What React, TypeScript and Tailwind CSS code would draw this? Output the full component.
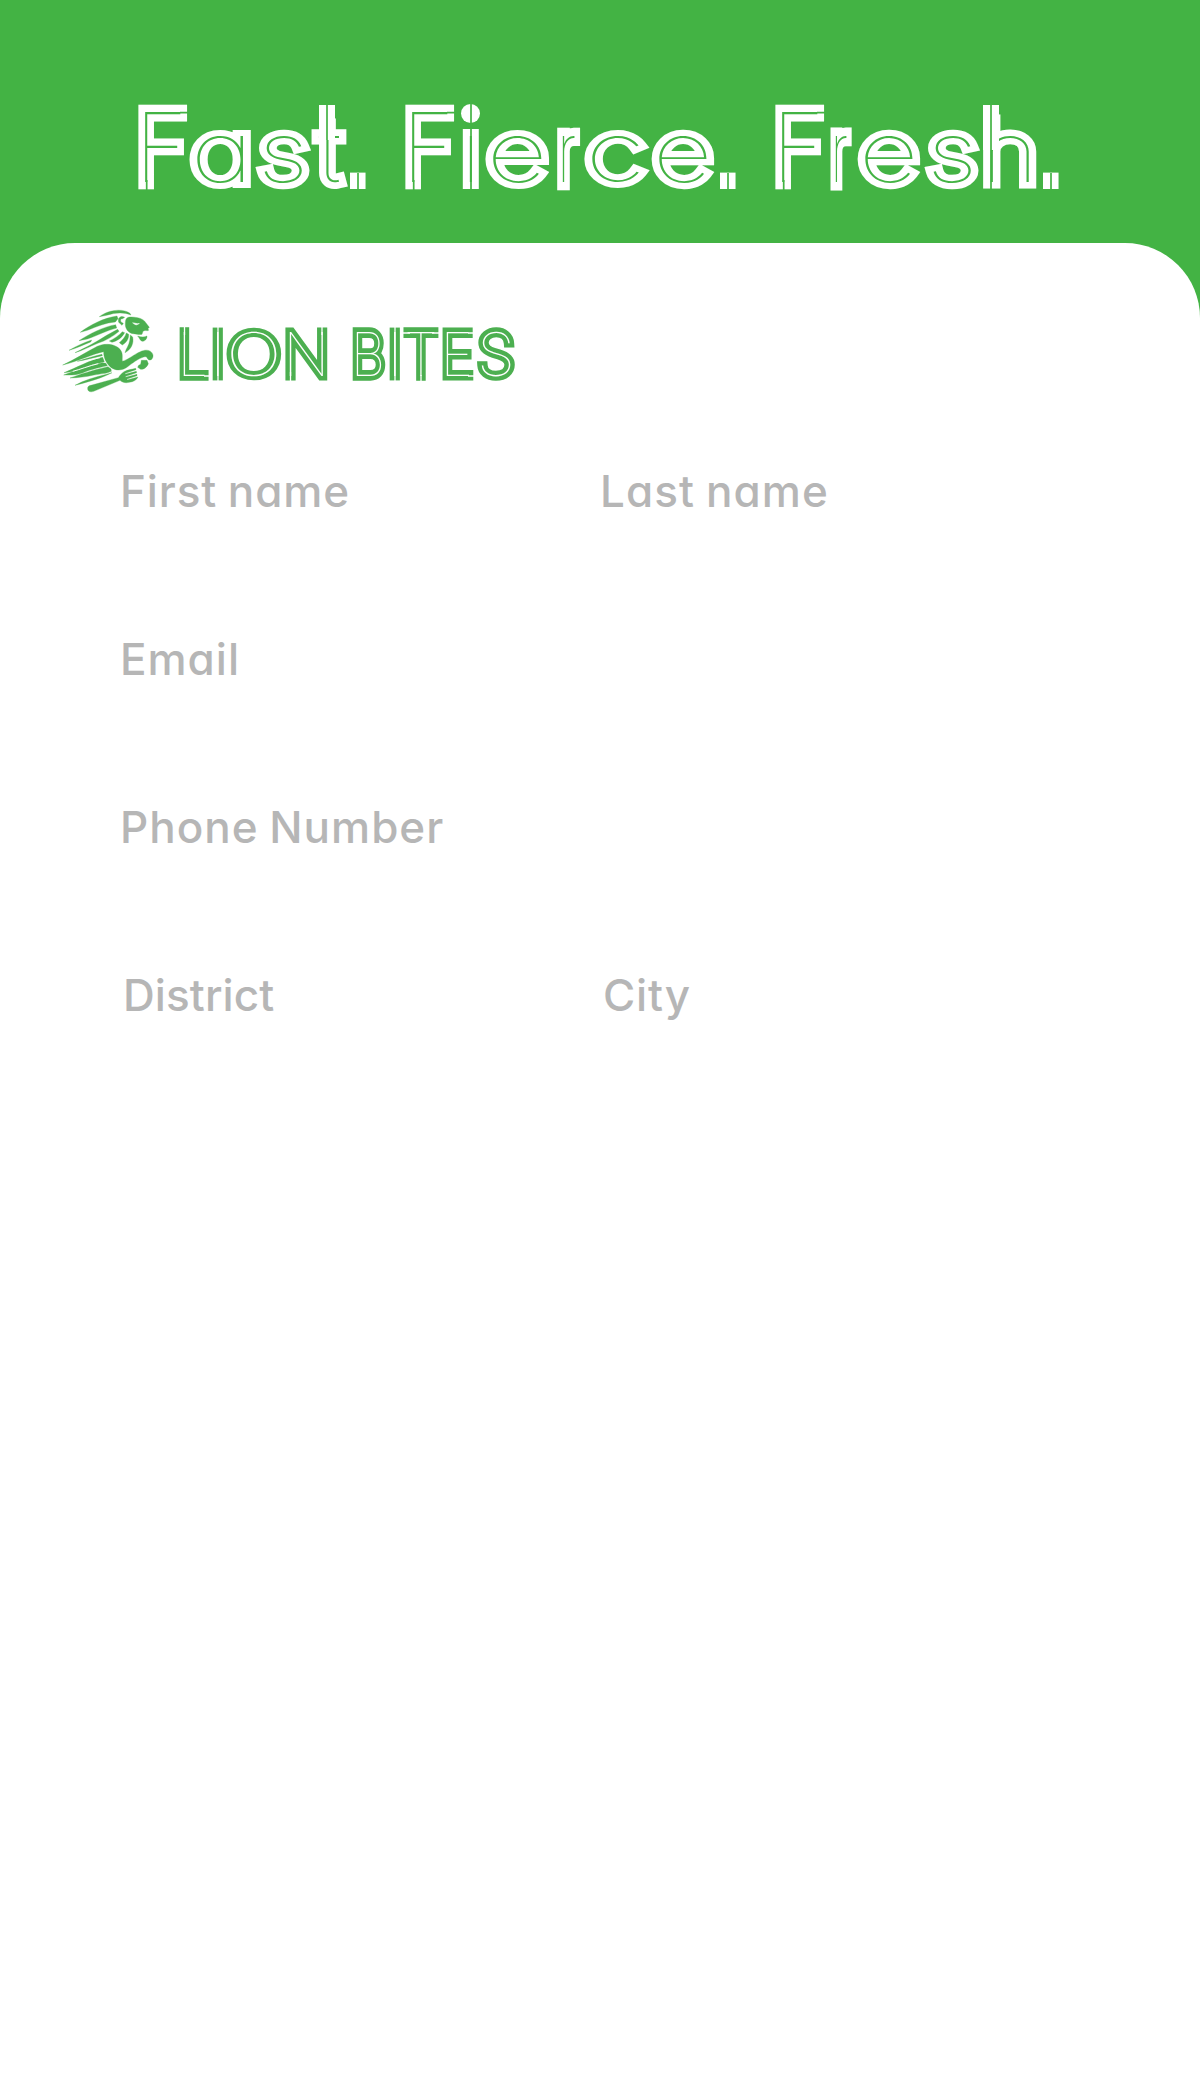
import React from 'react';

// Horizontal extent of each glyph's skeleton in Inter Thin, per 100 units.
const EXTENT: Record<string, [number, number]> = {
  F: [12.8, 50], a: [7, 49], s: [7, 42], t: [1, 22], i: [10, 12], e: [7, 51], r: [10, 29],
  c: [7, 47], h: [10, 48], L: [12.3, 49], I: [12, 13.5], O: [8, 67], N: [12.3, 64.5], B: [12.3, 56], T: [7, 55],
  E: [12.3, 51], S: [8, 53],
};

// [character, outer left, outer right, vertical scale]
type Letter = [string, number, number, number];

const HEADLINE: Letter[][] = [
  [['F', 138.5, 188, 0.965], ['a', 190, 251.5, 0.84], ['s', 257, 309, 0.84], ['t', 311.5, 347, 0.84], ['.', 350, 366, 1]],
  [['F', 405.5, 455, 0.965], ['i', 463, 479, 0.84], ['e', 486, 549, 0.84], ['r', 555, 582, 0.84], ['c', 585, 646, 0.84], ['e', 652, 714, 0.84], ['.', 720, 736, 1]],
  [['F', 775.5, 825, 0.965], ['r', 828, 854, 0.84], ['e', 858, 920, 0.84], ['s', 926, 978, 0.84], ['h', 983, 1036, 0.84], ['.', 1043, 1059, 1]],
];

const BRAND: Letter[][] = [
  [['L', 179.4, 209, 0.605], ['I', 213, 223, 0.605], ['O', 227, 281, 0.6], ['N', 285.4, 327, 0.605]],
  [['B', 352.4, 386, 0.605], ['I', 390, 400, 0.605], ['T', 403, 439, 0.605], ['E', 442.4, 474, 0.605], ['S', 477, 515, 0.6]],
];

interface InlineWordsProps {
  words: Letter[][];
  baseline: number;
  weight: number;
  hairline: number;
  ink: string;
  line: string;
}

function InlineWords({ words, baseline, weight, hairline, ink, line }: InlineWordsProps) {
  return (
    <>
      {words.map((letters, w) => (
        <g key={w}>
          {letters.map(([ch, left, right, sy], i) => {
            if (ch === '.') {
              return (
                <text key={i} x={left - 7.6} y={baseline + 7} fontSize="110" fontWeight="700" fill={ink} className="font-['Liberation_Sans',sans-serif]">
                  .
                </text>
              );
            }
            const [l, r] = EXTENT[ch];
            const half = (weight + hairline) / 2;
            const narrow = r - l < 4;
            const sx = narrow ? sy : (right - left - half * 2) / (r - l);
            const x = narrow ? (left + right) / 2 - ((l + r) / 2) * sx : left + half - l * sx;
            return (
              <text
                key={i}
                transform={`translate(${x} ${baseline}) scale(${sx} ${sy})`}
                fontSize="100"
                fontWeight="100"
                fill={line}
                stroke={ink}
                strokeWidth={weight}
                strokeMiterlimit="1.6"
                vectorEffect="non-scaling-stroke"
                className="font-['Inter',sans-serif] [font-feature-settings:'cv11'] [paint-order:stroke]"
              >
                {ch}
              </text>
            );
          })}
        </g>
      ))}
    </>
  );
}

function Headline() {
  return (
    <svg viewBox="0 0 1200 243" className="block h-[243px] w-full" role="img" aria-label="Fast. Fierce. Fresh.">
      <InlineWords words={HEADLINE} baseline={182} weight={14} hairline={2} ink="#fff" line="#43b344" />
      <path d="M327 105V140M991 105V150" stroke="#fff" strokeWidth="16" />
      <rect x="460" y="95" width="22" height="34" fill="#43b344" />
      <circle cx="470.5" cy="113.5" r="9.5" fill="#fff" />
      <path
        d="M146.7 180V190M413.7 180V190M783.7 180V190M180 112.7H189M447 112.7H456M817 112.7H826M327 105V140M471 104V190M991 105V190M358 173V190M728 173V190M1051 173V190"
        stroke="#43b344"
        strokeWidth="1.7"
      />
    </svg>
  );
}

function Lion() {
  return (
    <svg viewBox="0 0 345 300" className="h-[100px] w-[115px] shrink-0" fill="#4caf50" stroke="#4caf50" strokeWidth="1">
      <path d="M148 50C170 33 212 22 239 39L243 45C222 36 196 37 170 46Z" />
      <path d="M91 97C120 75 160 54 201 48L204 56L196 66C168 68 140 80 112 91Z" />
      <path d="M87 122C118 102 160 80 197 74L200 84C170 91 140 108 112 117Z" />
      <path d="M57 151C80 138 103 127 125 120L122 126C100 134 80 145 57 151Z" />
      <path d="M75 158C110 142 145 122 170 106L203 88L207 94C190 109 168 122 143 130C120 139 98 152 75 158Z" />
      <path d="M178 123C193 116 207 106 217 95L224 98C216 113 202 123 186 127Z" />
      <path d="M208 128C218 120 226 110 229 99L236 103C237 117 229 128 217 135Z" />
      <path d="M225 158C228 146 237 136 239 122C240 115 241 108 241 105L248 111C252 130 244 148 225 158Z" />
      <path d="M206 67C202 53 213 46 224 52L218 56C211 55 210 62 214 67L220 70L216 76Z" />
      <path d="M229 56C235 49 249 51 263 53C274 55 284 61 288 69L298 82L294 86L296 91C291 94 285 89 279 94L276 103C267 105 257 101 250 101C236 100 226 86 226 74C226 67 226 60 229 56ZM246 66C252 78 264 78 270 69C260 70 254 69 246 66Z" fillRule="evenodd" />
      <path d="M263 108C275 112 284 111 291 108C292 116 285 124 277 124C271 123 269 115 263 108Z" />
      <path d="M38 195C75 179 106 157 142 139C168 127 199 134 210 148C220 161 216 171 217 184C235 179 252 163 271 155C287 147 305 149 309 165C310 174 305 181 298 180C289 177 294 167 281 171C263 176 247 190 232 201C220 210 202 213 189 206C175 199 160 178 161 155C133 160 81 185 38 195Z" />
      <path d="M274 181L291 181L295 191C291 201 282 209 272 208L263 202L266 196L272 193Z" />
      <path d="M82 184C108 176 132 168 156 163L157 167C132 172 107 181 82 184Z" />
      <path d="M42 218C80 203 118 181 158 172L163 185C143 190 125 193 107 201C84 211 65 217 42 218Z" />
      <path d="M41 225C75 213 94 207 111 198L158 188L168 190L172 197C140 204 116 210 97 219C80 225 61 226 41 225Z" />
      <path d="M60 234C91 223 124 211 174 200L183 207L184 214C169 222 152 221 132 225C107 231 86 233 60 234Z" />
      <path d="M75 256C102 241 134 231 170 223L186 218C158 233 121 244 75 256Z" />
      <path d="M113 264C113 260 117 257 123 256L205 233C209 226 215 220 222 215C234 209 246 208 257 205L258 209L226 220L225 223L259 214L260 218L227 229L227 232L261 223L261 227L231 237L231 240L264 231C260 240 251 245 238 247C225 250 216 247 210 241L131 274C119 278 112 273 113 264Z" />
      <path d="M75 190C96 187 121 179 150 173M68 214C92 208 115 198 145 191" fill="none" stroke="#fff" strokeWidth="3" />
    </svg>
  );
}

function Brand() {
  return (
    <svg viewBox="165 300 365 100" className="h-[100px] w-[365px]" role="img" aria-label="LION BITES">
      <InlineWords words={BRAND} baseline={376.4} weight={8.8} hairline={1.2} ink="#4caf50" line="#fff" />
      <path
        d="M184.5 327V335M204 376H210M218 327V382M290.5 372V382M322 327V335M395 327V382M402 333H410M432 333H440M421 375V382M468 333H475M468 376H475"
        stroke="#fff"
        strokeWidth="1.3"
      />
    </svg>
  );
}

const FIELD = "block h-[168px] text-[44px] leading-[168px] font-medium text-[#b6b6b6] whitespace-nowrap [word-spacing:-2px] font-['Inter',sans-serif] [font-feature-settings:'cv11']";

export default function App() {
  return (
    <main className="min-h-[2100px] w-full bg-white">
      <div className="bg-[#43b344]">
        <header>
          <Headline />
        </header>
        <div className="h-[164px] rounded-t-[75px] bg-white pt-[57px]">
          <div className="flex pl-[50px]">
            <Lion />
            <Brand />
          </div>
        </div>
      </div>
      <form className="grid grid-cols-[480px_1fr] pl-[120px]">
        <label className={`${FIELD} tracking-[0.9px]`}>First name</label>
        <label className={`${FIELD} tracking-[1.1px]`}>Last name</label>
        <label className={`${FIELD} col-span-2 tracking-[1px]`}>Email</label>
        <label className={`${FIELD} col-span-2 tracking-[1px]`}>Phone Number</label>
        <label className={`${FIELD} pl-[3px] tracking-[0.1px]`}>District</label>
        <label className={`${FIELD} pl-[3px] tracking-[0.8px]`}>City</label>
      </form>
    </main>
  );
}
